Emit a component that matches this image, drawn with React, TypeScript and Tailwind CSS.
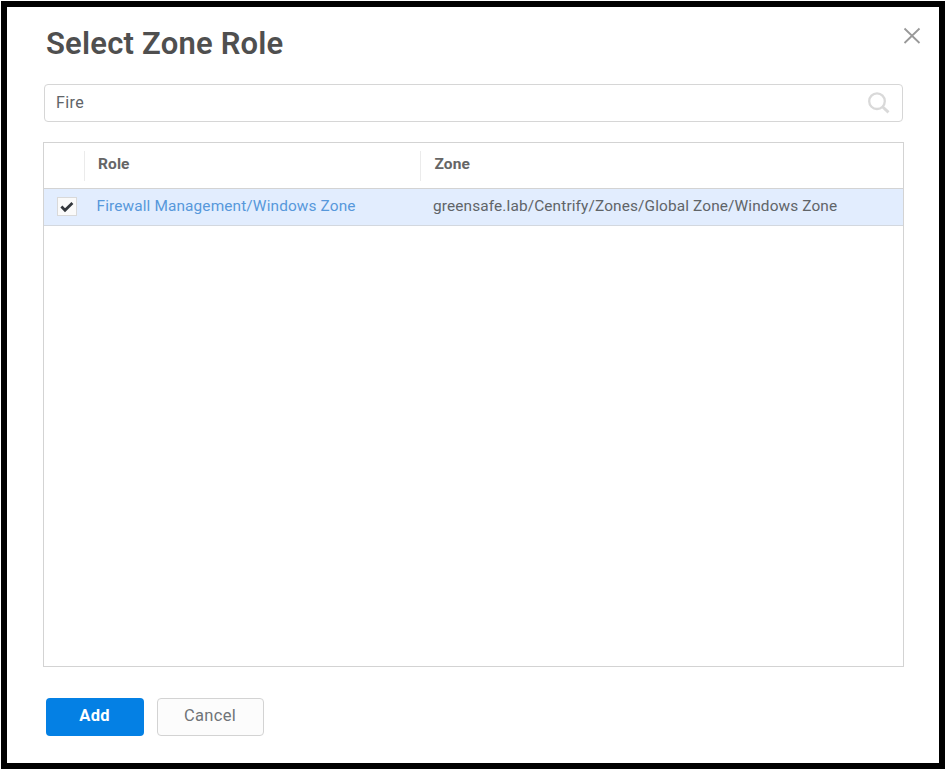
import React, { useState } from "react";

function CloseIcon() {
  return (
    <svg width="18" height="18" viewBox="0 0 18 18" fill="none" stroke="#999999" strokeWidth="1.8">
      <path d="M1.5 1.5 16.5 16M16.5 1.5 1.5 16" />
    </svg>
  );
}

function SearchIcon() {
  return (
    <svg width="24" height="24" viewBox="0 0 24 24" fill="none" stroke="#d9d9d9">
      <circle cx="10" cy="10.2" r="7.8" strokeWidth="2.3" />
      <path d="M15.5 15.8 21.5 21.4" strokeWidth="2.9" />
    </svg>
  );
}

function CheckIcon() {
  return (
    <svg width="14" height="12" viewBox="0 0 14 12" fill="none" stroke="#33373c" strokeWidth="2.8">
      <path d="M1.4 5.6 5 9.2 12.4 2" />
    </svg>
  );
}

export default function App() {
  const [query, setQuery] = useState("Fire");
  return (
    <div className="h-[769px] w-[947px] bg-white pt-px pl-px font-['Roboto',sans-serif] text-[#606468]">
      <main className="flex h-[768px] w-[944px] flex-col border-6 border-black bg-white pl-9">
        <header className="flex h-[77px] items-start justify-between pr-[18px]">
          <h1 className="pt-[19px] pl-[3px] text-[31px] leading-9 font-semibold tracking-[0.2px] whitespace-nowrap text-[#4f4f4f]">Select Zone Role</h1>
          <button aria-label="Close" className="mt-5">
            <CloseIcon />
          </button>
        </header>
        <label className="ml-px flex h-[38px] w-[859px] items-center justify-between rounded-[4px] border border-[#d6d6d6] pr-[11px] pl-[11px]">
          <input
            className="w-[600px] pb-px text-[16px] leading-5 tracking-[0.4px] outline-none"
            value={query}
            onChange={(e) => setQuery(e.target.value)}
          />
          <SearchIcon />
        </label>
        <section className="mt-5 h-[525px] w-[861px] border border-[#d3d3d3]">
          <div className="flex h-[46px] items-center border-b border-[#d3d3d3] text-[15.5px] leading-5 font-bold tracking-[0.1px] text-[#666666]">
            <div className="h-[30px] w-[41px] border-r border-[#ebebeb]" />
            <div className="h-[30px] w-[336px] border-r border-[#ebebeb] pt-[3px] pl-[13px]">Role</div>
            <div className="h-[30px] pt-[3px] pl-[13.5px]">Zone</div>
          </div>
          <div className="flex h-[37px] items-center border-b border-[#d3d8df] bg-[#e2edfe] text-[15.4px] leading-5 tracking-[0.13px]">
            <div className="w-[41px] pb-px pl-[13px]">
              <span className="flex h-[19px] w-5 items-center justify-center border border-[#d9d9d9] bg-[#fafafa]">
                <CheckIcon />
              </span>
            </div>
            <div className="w-[336px] pb-[2px] pl-[11.5px] whitespace-nowrap text-[#5798db]">Firewall Management/Windows Zone</div>
            <div className="pb-[2px] pl-3 whitespace-nowrap">greensafe.lab/Centrify/Zones/Global Zone/Windows Zone</div>
          </div>
        </section>
        <footer className="mt-[31px] flex gap-[13px] pl-[3px]">
          <button className="h-[38px] w-[98px] rounded-[4px] bg-[#0480e4] pr-px pb-[3px] text-[16.5px] leading-5 font-bold tracking-[0.2px] text-white">Add</button>
          <button className="h-[38px] w-[107px] rounded-[4px] border border-[#d3d3d3] bg-[#fcfcfc] pr-[7px] pb-[3px] pl-[6px] text-[16.5px] leading-5 tracking-[0.3px] text-[#707478]">Cancel</button>
        </footer>
      </main>
    </div>
  );
}
